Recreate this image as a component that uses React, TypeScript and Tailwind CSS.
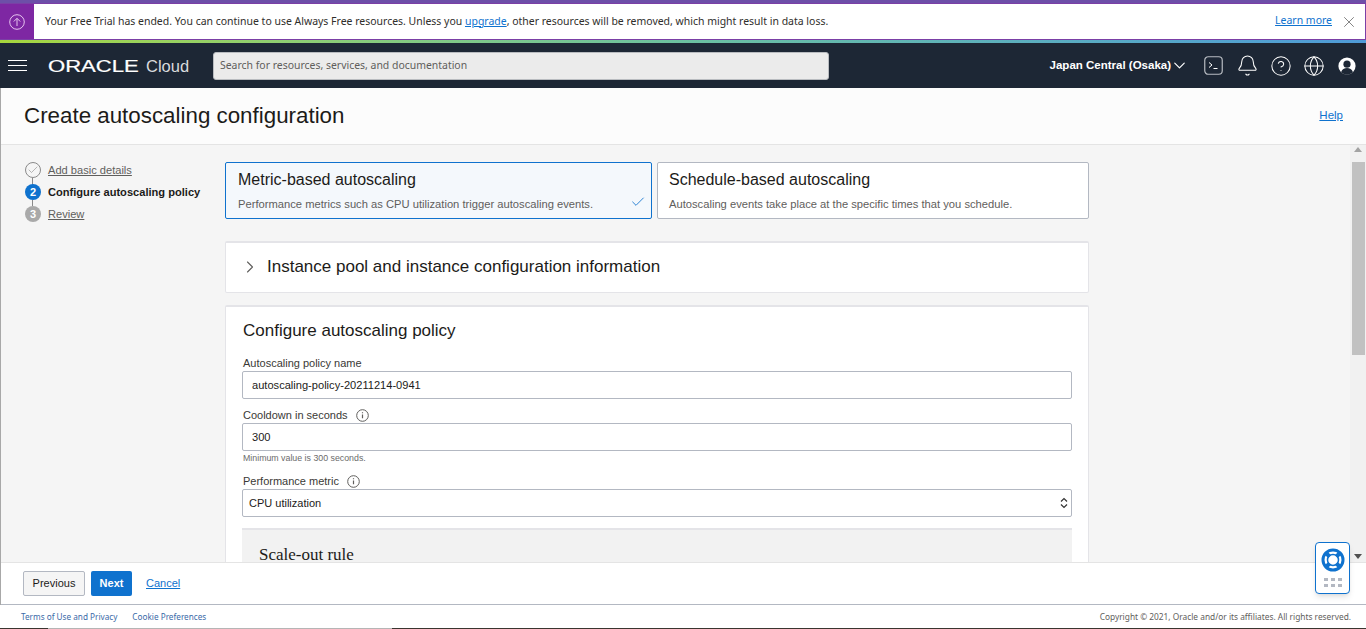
import { Bell, Check, ChevronDown, ChevronRight, CircleHelp, Globe, X } from "lucide-react";

function TerminalIcon() {
  return (
    <svg width="19" height="19" viewBox="0 0 19 19" fill="none">
      <rect x="0.75" y="0.75" width="17.5" height="17.5" rx="3.5" stroke="#b8bcc2" strokeWidth="1.2" />
      <path d="M5 6.5l3 2.5-3 2.5M9.5 12.5h4" stroke="#ffffff" strokeWidth="1" />
    </svg>
  );
}

function UserIcon() {
  return (
    <svg width="18" height="18" viewBox="0 0 18 18">
      <circle cx="9" cy="9" r="8.6" fill="#ffffff" />
      <circle cx="9" cy="7.2" r="3.6" fill="#1d2735" />
      <path d="M3 15.2c1-3 3.4-4.2 6-4.2s5 1.200 6 4.200A8.500 8.500 0 0 1 3 15.200z" fill="#1d2735" />
    </svg>
  );
}

function InfoIcon() {
  return (
    <svg width="13" height="13" viewBox="0 0 13 13" fill="none">
      <circle cx="6.500" cy="6.500" r="5.800" stroke="#5f5e5c" strokeWidth="1" />
      <path d="M6.500 5.500v3.800M6.500 3.200v1" stroke="#5f5e5c" strokeWidth="1.200" />
    </svg>
  );
}

function LifeRing() {
  return (
    <svg width="24" height="24" viewBox="0 0 24 24" fill="none">
      <circle cx="12" cy="12" r="10" stroke="#0f72ce" strokeWidth="3" />
      <circle cx="12" cy="12" r="5.500" stroke="#0f72ce" strokeWidth="1.500" />
      <path d="M4.500 4.500l4 4M19.500 4.500l-4 4M4.500 19.500l4-4M19.500 19.500l-4-4" stroke="#0f72ce" strokeWidth="4" />
    </svg>
  );
}

function Steps() {
  return (
    <aside className="w-[224px] shrink-0 pt-[14px] pl-[24px] text-[11.100px]">
      <div className="flex h-[22px] items-center gap-[7px]">
        <span className="relative flex h-4 w-4 items-center justify-center rounded-full border border-[#8a8a8a] bg-[#f5f5f5]">
          <Check className="h-3 w-3 text-[#8a8a8a]" strokeWidth={1.200} />
          <span className="absolute top-[15px] left-[6px] h-[8px] w-px bg-[#8a8a8a]" />
        </span>
        <a className="text-[#5f5e5c] underline">Add basic details</a>
      </div>
      <div className="flex h-[22px] items-center gap-[7px]">
        <span className="relative flex h-4 w-4 items-center justify-center rounded-full bg-[#0f72ce] text-[11px] font-bold text-white">
          2
          <span className="absolute top-[16px] left-[7px] h-[6px] w-px bg-[#8a8a8a]" />
        </span>
        <span className="font-bold text-[#1c1b19]">Configure autoscaling policy</span>
      </div>
      <div className="flex h-[22px] items-center gap-[7px]">
        <span className="flex h-4 w-4 items-center justify-center rounded-full bg-[#a9a9a9] text-[11px] font-bold text-white">3</span>
        <a className="text-[#5f5e5c] underline">Review</a>
      </div>
    </aside>
  );
}

function Field({ label, info, children }: { label: string; info?: boolean; children: React.ReactNode }) {
  return (
    <div>
      <div className="flex h-4 items-center gap-[8px] pl-px text-[11px] text-[#3a3936]">
        {label}
        {info && <InfoIcon />}
      </div>
      {children}
    </div>
  );
}

export default function App() {
  return (
    <div className="flex h-[629px] w-[1366px] flex-col overflow-hidden bg-white font-['Liberation_Sans',Arial,sans-serif]">
      {/* Trial banner */}
      <div className="h-[3px] bg-[#6d4fa8]" />
      <div className="flex h-[37px] items-center border-y border-r border-[#7b3fa6] bg-white text-[#2f2e2b]">
        <div className="flex h-full w-[34px] items-center justify-center bg-[#7e27a3]">
          <svg width="16" height="16" viewBox="0 0 16 16" fill="none">
            <circle cx="8" cy="8" r="7.300" stroke="#e6c4ee" strokeWidth="1" />
            <path d="M8 12V4.500M4.800 7.500L8 4.300l3.200 3.200" stroke="#e6c4ee" strokeWidth="1" />
          </svg>
        </div>
        <p className="ml-[11px] flex-1 font-['Noto_Sans',sans-serif] text-[10.480px]">
          Your Free Trial has ended. You can continue to use Always Free resources. Unless you{" "}
          <a className="text-[#0f72ce] underline">upgrade</a>, other resources will be removed, which might result in data loss.
        </p>
        <a className="mr-[8px] mb-[2px] font-['Noto_Sans',sans-serif] text-[10.480px] text-[#0f72ce] underline">Learn more</a>
        <X className="mr-[7px] h-[18px] w-[18px] text-[#6b6b6b]" strokeWidth={1.100} />
      </div>
      <div className="h-[3px] bg-gradient-to-r from-[#a6d63c] via-[#6cc0a0] to-[#4f9bd8]" />

      {/* Top nav */}
      <nav className="flex h-[45px] items-center bg-[#1d2735] text-white">
        <div className="ml-[8px] flex w-[19px] flex-col gap-[4px]">
          <span className="h-px bg-white" />
          <span className="h-px bg-white" />
          <span className="h-px bg-white" />
        </div>
        <div className="ml-[21px] flex w-[146px] items-center pt-px">
          <span className="mt-[2px] w-[91px] origin-left scale-x-[1.380] whitespace-nowrap text-[16px] leading-none font-normal [-webkit-text-stroke:0.2px_white]">ORACLE</span>
          <span className="ml-[7px] text-[16.500px] font-light text-[#d9dadc]">Cloud</span>
        </div>
        <div className="ml-[19px] flex h-[28px] w-[616px] items-center rounded-[3px] border border-[#b9bcc0] bg-[#ebebeb] pt-px pl-[6px] font-['Noto_Sans',sans-serif] text-[10.450px] text-[#5f5e5c]">
          Search for resources, services, and documentation
        </div>
        <div className="ml-auto flex items-center">
          <span className="pt-px text-[11.500px] font-bold">Japan Central (Osaka)</span>
          <ChevronDown className="-ml-px h-[19px] w-[19px]" strokeWidth={1.500} />
          <span className="ml-[15px]"><TerminalIcon /></span>
          <Bell className="ml-[13px] h-[23px] w-[23px]" strokeWidth={1.100} />
          <CircleHelp className="ml-[11px] h-[22px] w-[22px]" strokeWidth={1.100} />
          <Globe className="ml-[11px] h-[22px] w-[22px]" strokeWidth={1.100} />
          <span className="mr-[10px] ml-[13px]"><UserIcon /></span>
        </div>
      </nav>

      {/* Page body */}
      <div className="relative flex min-h-0 flex-1 flex-col border-l border-[#a8a8a8]">
        <header className="flex h-[57px] shrink-0 items-center justify-between border-b border-[#e4e4e4] bg-[#fcfcfc] pr-[23px] pl-[23px]">
          <h1 className="mb-px text-[22.350px] font-normal text-[#1c1b19]">Create autoscaling configuration</h1>
          <a className="text-[11.500px] text-[#0f72ce] underline">Help</a>
        </header>

        <div className="flex min-h-0 flex-1 bg-[#f5f5f5]">
          <Steps />
          <main className="min-h-0 flex-1 overflow-hidden pt-[17px]">
            <div className="w-[864px]">
              <div className="flex gap-[5px]">
                <div className="relative h-[57px] w-[427px] rounded-[2px] border border-[#0f72ce] bg-[#f4f8fc] px-[12px] pt-[7px]">
                  <div className="text-[16px] leading-[20px] text-[#1c1b19]">Metric-based autoscaling</div>
                  <div className="mt-[6px] text-[11.200px] text-[#5f5e5c]">Performance metrics such as CPU utilization trigger autoscaling events.</div>
                  <Check className="absolute right-[5px] bottom-[8px] h-[16px] w-[16px] text-[#0f72ce]" strokeWidth={1.300} />
                </div>
                <div className="h-[57px] w-[432px] rounded-[2px] border border-[#b3b8c2] bg-white px-[11px] pt-[7px]">
                  <div className="text-[16px] leading-[20px] text-[#1c1b19]">Schedule-based autoscaling</div>
                  <div className="mt-[6px] text-[11.200px] text-[#5f5e5c]">Autoscaling events take place at the specific times that you schedule.</div>
                </div>
              </div>

              <div className="mt-[22px] flex h-[52px] items-center rounded-[2px] border border-t-2 border-[#e4e4e8] bg-white pb-[2px] pl-[14px]">
                <ChevronRight className="h-5 w-5 text-[#5f5e5c]" strokeWidth={1.300} />
                <span className="ml-[7px] text-[17px] text-[#1c1b19]">Instance pool and instance configuration information</span>
              </div>

              <section className="mt-[12px] rounded-[2px] border border-t-2 border-[#e4e4e8] bg-white px-[16px] pt-[14px]">
                <h2 className="pl-px text-[17px] leading-[20px] text-[#1c1b19]">Configure autoscaling policy</h2>
                <div className="mt-[14px]">
                  <Field label="Autoscaling policy name">
                    <div className="flex h-[28px] items-center rounded-[2px] border border-[#b3b8c2] pl-[9px] text-[11.100px] text-[#1c1b19]">autoscaling-policy-20211214-0941</div>
                  </Field>
                </div>
                <div className="mt-[8px]">
                  <Field label="Cooldown in seconds" info>
                    <div className="flex h-[28px] items-center rounded-[2px] border border-[#b3b8c2] pl-[9px] text-[11.100px] text-[#1c1b19]">300</div>
                  </Field>
                  <div className="mt-[1px] h-[12px] pl-px text-[8.800px] leading-[12px] text-[#6b6b6b]">Minimum value is 300 seconds.</div>
                </div>
                <div className="mt-[9px]">
                  <Field label="Performance metric" info>
                    <div className="flex h-[28px] items-center justify-between rounded-[2px] border border-[#b3b8c2] pr-[3px] pl-[6px] text-[11px] text-[#1c1b19]">
                      CPU utilization
                      <svg width="8" height="12" viewBox="0 0 8 12" fill="none">
                        <path d="M1 4.500L4 1.500l3 3M1 7.500l3 3 3-3" stroke="#333333" strokeWidth="1.200" />
                      </svg>
                    </div>
                  </Field>
                </div>
                <div className="mt-[11px] h-[60px] border-t-2 border-[#e4e4e8] bg-[#f2f2f2] pt-[18px] pl-[17px]">
                  <h3 className="h-[14px] font-['Liberation_Serif',serif] text-[17px] leading-[14px] font-normal text-[#1c1b19]">Scale-out rule</h3>
                </div>
              </section>
            </div>
          </main>

          {/* Browser scrollbar */}
          <div className="flex w-[16px] shrink-0 flex-col items-center bg-[#f1f1f1]">
            <span className="mt-[2px] h-0 w-0 border-x-[4px] border-b-[5px] border-x-transparent border-b-[#a3a3a3]" />
            <span className="mt-[10px] h-[193px] w-[13px] bg-[#c1c1c1]" />
            <span className="mt-auto mb-[3px] h-0 w-0 border-x-[4px] border-t-[5px] border-x-transparent border-t-[#505050]" />
          </div>
        </div>

        <div className="flex h-[43px] shrink-0 items-center border-y border-t-[#e4e4e4] border-b-[#b3b8c2] bg-white pl-[22px] text-[11px]">
          <button className="h-[25px] w-[62px] rounded-[2px] border border-[#b3b8c2] bg-[#f5f5f5] text-[#1c1b19]">Previous</button>
          <button className="ml-[6px] h-[25px] w-[41px] rounded-[2px] bg-[#0f72ce] font-bold text-white">Next</button>
          <a className="ml-[14px] text-[#0f72ce] underline">Cancel</a>
        </div>

        {/* Help widget */}
        <div className="absolute top-[454px] left-[1314px] flex h-[52px] w-[35px] flex-col items-center rounded-[4px] border border-[#0f72ce] bg-white pt-[5px] shadow-md">
          <LifeRing />
          <div className="mt-[6px] grid grid-cols-3 gap-x-[3px] gap-y-[3px]">
            {[0, 1, 2, 3, 4, 5].map((n) => (
              <span key={n} className="h-[3px] w-[4px] bg-[#b3b8c2]" />
            ))}
          </div>
        </div>
      </div>

      <footer className="shrink-0 bg-white font-['Noto_Sans',sans-serif]">
        <div className="flex h-[23px] items-center justify-between pt-[1px] pr-[15px] pl-[21px]">
          <div className="flex gap-[15px] text-[8.200px] text-[#3a6aa8]">
            <a>Terms of Use and Privacy</a>
            <a>Cookie Preferences</a>
          </div>
          <span className="text-[8.330px] text-[#5f5e5c]">Copyright © 2021, Oracle and/or its affiliates. All rights reserved.</span>
        </div>
        <div className="flex h-px">
          <span className="w-[48px] bg-[#3a3530]" />
          <span className="w-[344px] bg-[#b5b5b5]" />
          <span className="flex-1 bg-[#3a3530]" />
        </div>
      </footer>
    </div>
  );
}
